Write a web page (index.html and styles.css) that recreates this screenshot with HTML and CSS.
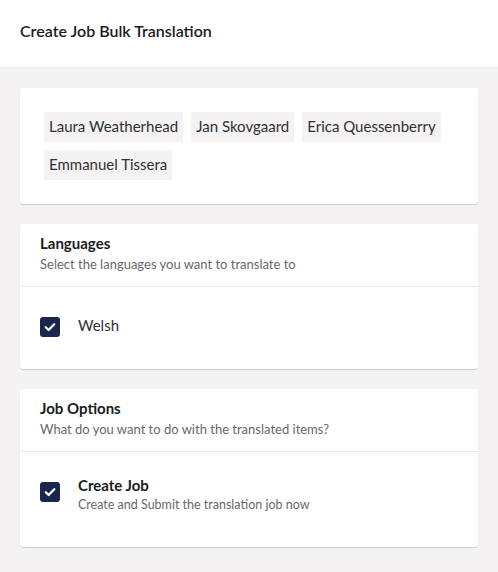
FILE: index.html
```html
<!DOCTYPE html>
<html>
<head>
<meta charset="utf-8">
<link rel="stylesheet" href="styles.css">
</head>
<body>
<header class="topbar">
  <h1 class="title">Create Job Bulk Translation</h1>
</header>
<main class="content">
  <section class="card card-pad">
    <div class="chips">
      <span class="chip">Laura Weatherhead</span>
      <span class="chip">Jan Skovgaard</span>
      <span class="chip">Erica Quessenberry</span>
      <span class="chip">Emmanuel Tissera</span>
    </div>
  </section>
  <section class="card">
    <div class="card-head">
      <div class="card-title">Languages</div>
      <div class="card-sub">Select the languages you want to translate to</div>
    </div>
    <div class="card-body">
      <label class="option">
        <span class="check"><svg viewBox="0 0 20 20" width="20" height="20"><path d="M5.8 10.2l2.8 2.8L14.3 7.3" fill="none" stroke="#fff" stroke-width="2.3" stroke-linecap="round" stroke-linejoin="round"/></svg></span>
        <span class="opt-label">Welsh</span>
      </label>
    </div>
  </section>
  <section class="card">
    <div class="card-head">
      <div class="card-title">Job Options</div>
      <div class="card-sub">What do you want to do with the translated items?</div>
    </div>
    <div class="card-body">
      <label class="option">
        <span class="check"><svg viewBox="0 0 20 20" width="20" height="20"><path d="M5.8 10.2l2.8 2.8L14.3 7.3" fill="none" stroke="#fff" stroke-width="2.3" stroke-linecap="round" stroke-linejoin="round"/></svg></span>
        <span class="opt-text">
          <span class="opt-title">Create Job</span>
          <span class="opt-desc">Create and Submit the translation job now</span>
        </span>
      </label>
    </div>
  </section>
</main>
</body>
</html>
```
FILE: styles.css
```css
html, body {
  margin: 0;
  padding: 0;
}
body {
  font-family: Lato, "Open Sans", sans-serif;
  color: #1b1b1d;
  background: #f4f2f2;
  width: 498px;
  height: 572px;
  overflow: hidden;
}
.topbar {
  background: #fff;
  height: 68px;
  border-bottom: 1px solid #e9e9eb;
  display: flex;
  align-items: center;
  padding: 0 20px;
  box-sizing: border-box;
}
.title {
  margin: 0;
  font-size: 16px;
  font-weight: 600;
  color: #1b1b1d;
  position: relative;
  top: -3px;
}
.content {
  padding: 20px;
  display: flex;
  flex-direction: column;
  gap: 20px;
}
.card {
  background: #fff;
  border-radius: 3px;
  box-shadow: 0 1px 1px rgba(0,0,0,0.16);
}
.card-pad {
  padding: 24px;
}
.chips {
  display: flex;
  flex-wrap: wrap;
  gap: 8px;
}
.chip {
  background: #f4f2f2;
  height: 30px;
  line-height: 29px;
  padding: 0 5px;
  font-size: 15px;
  color: #303033;
  border-radius: 1px;
}
.card-head {
  padding: 10px 20px 12px;
  border-bottom: 1px solid #e9e9eb;
}
.card-title {
  font-size: 15px;
  font-weight: 700;
  line-height: 18px;
  color: #1b1b1d;
}
.card-sub {
  font-size: 13px;
  line-height: 20px;
  color: #68676b;
  margin-top: 2px;
}
.card-body {
  padding: 30px 20px 32px;
}
.option {
  display: flex;
  align-items: flex-start;
  gap: 18px;
}
.check {
  width: 20px;
  height: 20px;
  background: #1b264f;
  border-radius: 3px;
  flex: none;
  display: block;
}
.check svg {
  display: block;
}
.opt-label {
  font-size: 15px;
  line-height: 16px;
  color: #303033;
}
.opt-text {
  display: flex;
  flex-direction: column;
  margin-top: -7px;
}
.opt-title {
  font-size: 15px;
  font-weight: 700;
  line-height: 20px;
  color: #1b1b1d;
}
.opt-desc {
  font-size: 12.5px;
  line-height: 20px;
  color: #68676b;
}
```
